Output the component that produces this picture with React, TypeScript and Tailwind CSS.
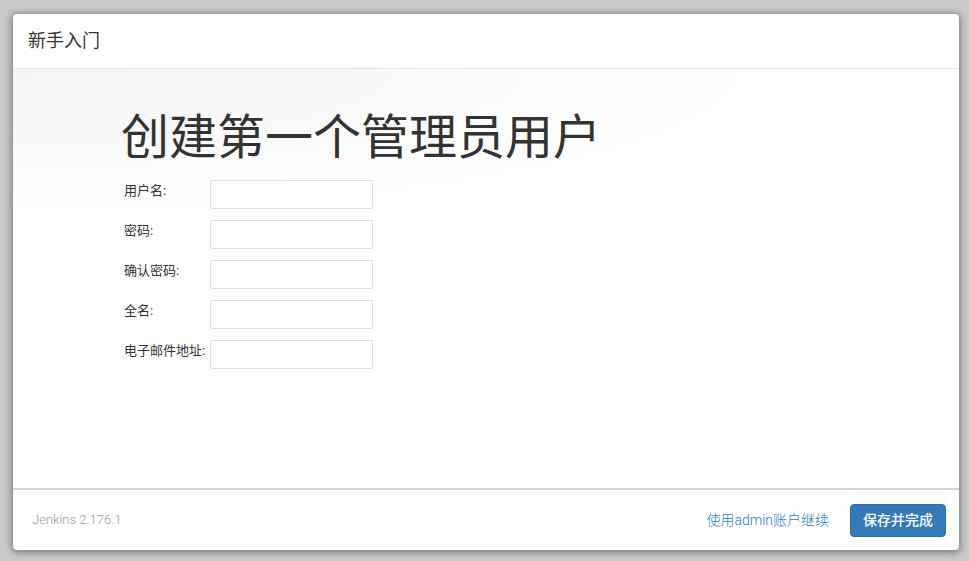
const fields = ["用户名:", "密码:", "确认密码:", "全名:", "电子邮件地址:"]

export default function App() {
  return (
    <div
      className="h-screen w-full bg-[#c9c9c9] pt-[14px] pl-[13px] pr-[10px] pb-[11px]"
      style={{ fontFamily: 'Roboto, "Noto Sans CJK SC", sans-serif' }}
    >
      <div className="flex h-full flex-col overflow-hidden rounded-[4px] bg-white shadow-[0_1px_6px_2px_rgba(0,0,0,0.35)]">
        {/* header */}
        <div className="flex h-[55px] shrink-0 items-center border-b border-[#e5e5e5] px-[15px]">
          <h4 className="text-[18px] leading-none text-[#333]">新手入门</h4>
        </div>

        {/* body */}
        <div className="flex-1 bg-[radial-gradient(ellipse_80%_35%_at_0%_0%,#f4f4f4_0%,#ffffff_100%)] pl-[108px] pt-[39px]">
          <h1 className="text-[48px] font-normal leading-[60px] text-[#333]">创建第一个管理员用户</h1>
          <div className="mt-[12px] flex flex-col gap-[11px]">
            {fields.map((label) => (
              <div key={label} className="flex items-start">
                <label className="w-[89px] shrink-0 pl-[3px] pt-[3px] text-[13px] leading-[16px] text-[#333]">
                  {label}
                </label>
                <input
                  type={label.includes("密码") ? "password" : "text"}
                  className="h-[29px] w-[163px] rounded-[2px] border border-[#ddd] bg-white px-2 text-[12px] outline-none"
                />
              </div>
            ))}
          </div>
        </div>

        {/* footer */}
        <div className="flex h-[62px] shrink-0 items-center border-t-2 border-[#d4d4d4] pl-[19px] pr-[13px]">
          <span className="text-[13px] font-light text-[#999]">Jenkins 2.176.1</span>
          <div className="ml-auto flex items-center gap-[21px]">
            <a href="#" className="text-[14px] font-light text-[#337ab7]">
              使用admin账户继续
            </a>
            <button className="h-[33px] w-[96px] rounded-[4px] border border-[#2e6da4] bg-[#337ab7] text-[14px] font-medium text-white">
              保存并完成
            </button>
          </div>
        </div>
      </div>
    </div>
  )
}
